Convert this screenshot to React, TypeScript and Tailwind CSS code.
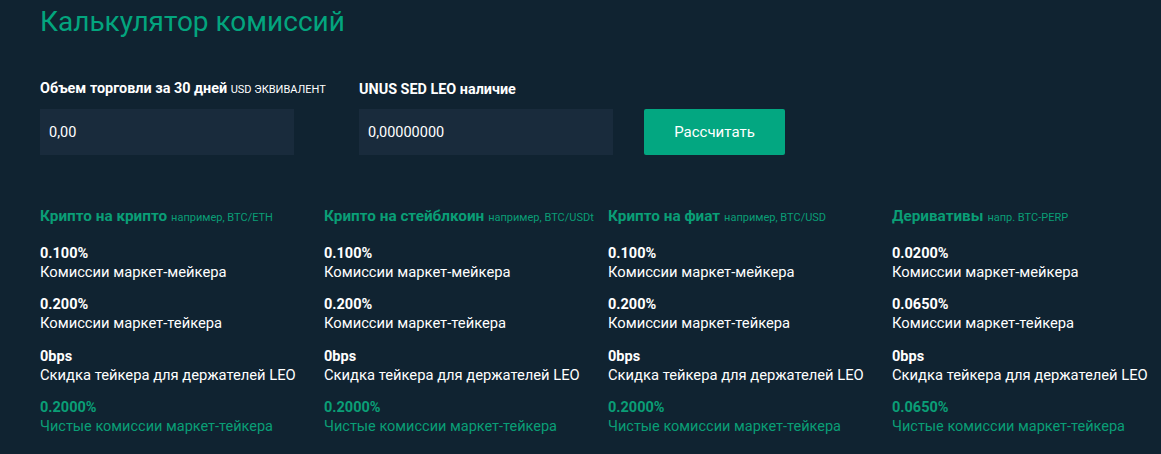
import React from 'react'

const columns = [
  {
    title: 'Крипто на крипто',
    example: 'например, BTC/ETH',
    maker: '0.100%',
    taker: '0.200%',
    net: '0.2000%'
  },
  {
    title: 'Крипто на стейблкоин',
    example: 'например, BTC/USDt',
    maker: '0.100%',
    taker: '0.200%',
    net: '0.2000%'
  },
  {
    title: 'Крипто на фиат',
    example: 'например, BTC/USD',
    maker: '0.100%',
    taker: '0.200%',
    net: '0.2000%'
  },
  {
    title: 'Деривативы',
    example: 'напр. BTC-PERP',
    maker: '0.0200%',
    taker: '0.0650%',
    net: '0.0650%'
  }
]

const App = () => {
  return (
    <div
      className="w-[1161px] h-[454px] bg-[#102331] text-white px-10 overflow-hidden"
      style={{ fontFamily: 'Roboto, "Liberation Sans", sans-serif' }}
    >
      <h1 className="pt-[4px] text-[28px] leading-[36px] text-[#03a57e]">Калькулятор комиссий</h1>

      <div className="mt-[41px] flex items-end">
        <div className="w-[254px]">
          <div className="text-[14.4px] font-bold leading-[16px] whitespace-nowrap">
            Объем торговли за 30 дней{' '}
            <span className="text-[11px] font-normal">USD ЭКВИВАЛЕНТ</span>
          </div>
          <input
            defaultValue="0,00"
            className="mt-[11px] w-full h-[46px] bg-[#192b3c] px-[9px] text-[14.5px] text-white outline-none"
          />
        </div>
        <div className="ml-[65px] w-[254px]">
          <div className="text-[14.4px] font-bold leading-[16px]">UNUS SED LEO наличие</div>
          <input
            defaultValue="0,00000000"
            className="mt-[11px] w-full h-[46px] bg-[#192b3c] px-[9px] text-[14.5px] text-white outline-none"
          />
        </div>
        <button className="ml-[31px] w-[141px] h-[46px] rounded-[2px] bg-[#03a781] text-[15px] text-white">
          Рассчитать
        </button>
      </div>

      <div className="mt-[52px] grid grid-cols-4 w-[1136px]">
        {columns.map((c) => (
          <div key={c.title}>
            <div className="leading-[18px] whitespace-nowrap">
              <span className="text-[15.3px] font-bold text-[#0a9e76]">{c.title}</span>{' '}
              <span className="text-[11px] text-[#0a9e76]">{c.example}</span>
            </div>
            <div className="mt-[17px] text-[14.75px] leading-[19px]">
              <div className="font-bold text-[14.5px]">{c.maker}</div>
              <div>Комиссии маркет-мейкера</div>
            </div>
            <div className="mt-[13px] text-[14.75px] leading-[19px]">
              <div className="font-bold text-[14.5px]">{c.taker}</div>
              <div>Комиссии маркет-тейкера</div>
            </div>
            <div className="mt-[13.5px] text-[14.75px] leading-[19px]">
              <div className="font-bold text-[14.5px]">0bps</div>
              <div>Скидка тейкера для держателей LEO</div>
            </div>
            <div className="mt-[13px] text-[14.75px] leading-[19px] text-[#0a9e76]">
              <div className="font-bold text-[14.5px]">{c.net}</div>
              <div className="whitespace-nowrap text-[14.5px]">Чистые комиссии маркет-тейкера</div>
            </div>
          </div>
        ))}
      </div>
    </div>
  )
}

export default App
